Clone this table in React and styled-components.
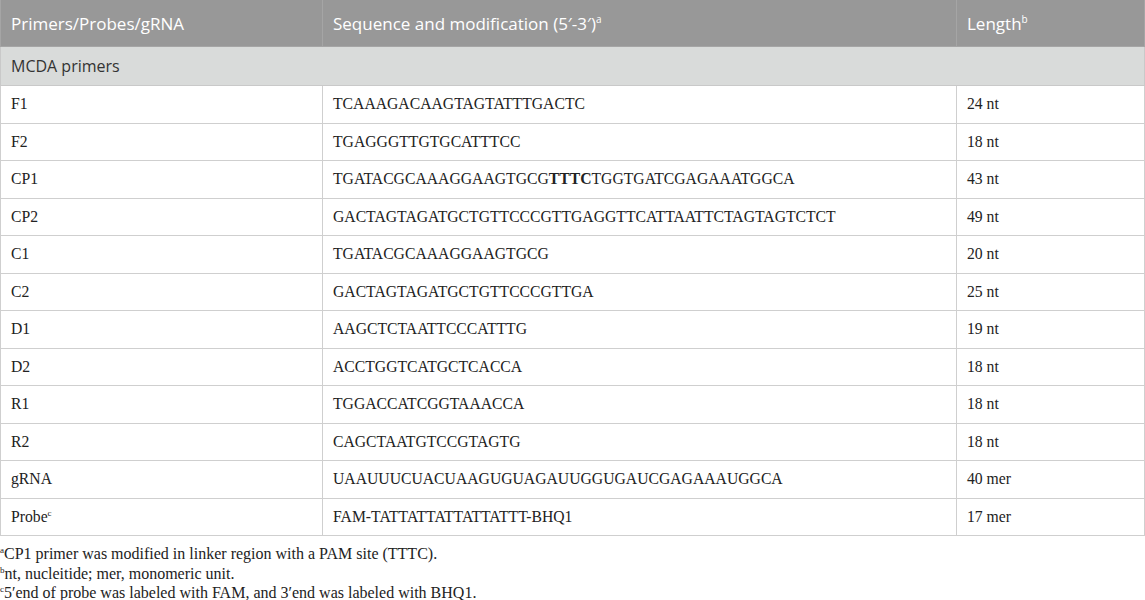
import React from 'react'
import styled, { createGlobalStyle } from 'styled-components'

const Global = createGlobalStyle`
  body {
    margin: 0;
    background: #fff;
  }
`

const Table = styled.table`
  width: 1145px;
  border-collapse: collapse;
  table-layout: fixed;
`

const Th = styled.th`
  height: 46px;
  padding: 0 10px;
  background: #989898;
  color: #fff;
  font-family: "Open Sans", sans-serif;
  font-size: 17px;
  font-weight: 400;
  text-align: left;
  border: 1px solid #a5a5a5;
  border-top: none;
`

const HSup = styled.sup`
  font-size: 10px;
  vertical-align: 7px;
  line-height: 0;
`

const Group = styled.td`
  height: 38px;
  padding: 0 10px;
  background: #d9dbda;
  color: #333;
  font-family: "Open Sans", sans-serif;
  font-size: 16px;
  border: 1px solid #c9c9c9;
`

const Td = styled.td`
  height: 36.5px;
  padding: 0 10px;
  color: #222;
  font-family: "Liberation Serif", serif;
  font-size: 15.7px;
  border: 1px solid #cfcfcf;
  white-space: nowrap;
`

const Sup = styled.sup`
  font-size: 9px;
  vertical-align: 6px;
  line-height: 0;
`

const Notes = styled.div`
  padding-top: 8px;
  font-family: "Liberation Serif", serif;
  font-size: 16px;
  color: #222;
`

const Note = styled.div`
  line-height: 19.5px;
`

const rows = [
  ['F1', 'TCAAAGACAAGTAGTATTTGACTC', '24 nt'],
  ['F2', 'TGAGGGTTGTGCATTTCC', '18 nt'],
  ['CP1', <>TGATACGCAAAGGAAGTGCG<b>TTTC</b>TGGTGATCGAGAAATGGCA</>, '43 nt'],
  ['CP2', 'GACTAGTAGATGCTGTTCCCGTTGAGGTTCATTAATTCTAGTAGTCTCT', '49 nt'],
  ['C1', 'TGATACGCAAAGGAAGTGCG', '20 nt'],
  ['C2', 'GACTAGTAGATGCTGTTCCCGTTGA', '25 nt'],
  ['D1', 'AAGCTCTAATTCCCATTTG', '19 nt'],
  ['D2', 'ACCTGGTCATGCTCACCA', '18 nt'],
  ['R1', 'TGGACCATCGGTAAACCA', '18 nt'],
  ['R2', 'CAGCTAATGTCCGTAGTG', '18 nt'],
  ['gRNA', 'UAAUUUCUACUAAGUGUAGAUUGGUGAUCGAGAAAUGGCA', '40 mer'],
  [<>Probe<Sup>c</Sup></>, 'FAM-TATTATTATTATTATTT-BHQ1', '17 mer'],
]

function App() {
  return (
    <>
      <Global />
      <Table>
        <colgroup>
          <col style={{ width: 322 }} />
          <col style={{ width: 634 }} />
          <col style={{ width: 188 }} />
        </colgroup>
        <thead>
          <tr>
            <Th>Primers/Probes/gRNA</Th>
            <Th>Sequence and modification (5′-3′)<HSup>a</HSup></Th>
            <Th>Length<HSup>b</HSup></Th>
          </tr>
        </thead>
        <tbody>
          <tr>
            <Group colSpan={3}>MCDA primers</Group>
          </tr>
          {rows.map((r, i) => (
            <tr key={i}>
              <Td>{r[0]}</Td>
              <Td>{r[1]}</Td>
              <Td>{r[2]}</Td>
            </tr>
          ))}
        </tbody>
      </Table>
      <Notes>
        <Note><Sup>a</Sup>CP1 primer was modified in linker region with a PAM site (TTTC).</Note>
        <Note><Sup>b</Sup>nt, nucleitide; mer, monomeric unit.</Note>
        <Note><Sup>c</Sup>5′end of probe was labeled with FAM, and 3′end was labeled with BHQ1.</Note>
      </Notes>
    </>
  )
}

export default App
